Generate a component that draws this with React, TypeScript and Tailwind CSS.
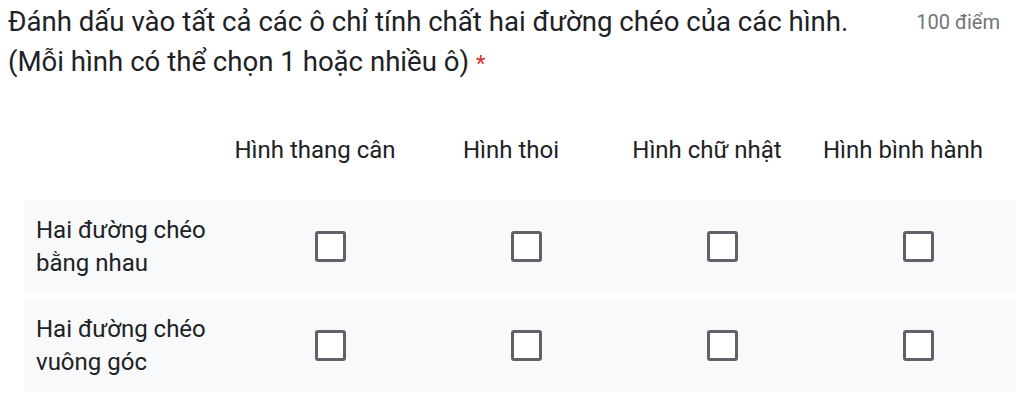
import React from "react";

const cols = ["Hình thang cân", "Hình thoi", "Hình chữ nhật", "Hình bình hành"];
const rows = [
  ["Hai đường chéo", "bằng nhau"],
  ["Hai đường chéo", "vuông góc"],
];

function Box() {
  return <div className="w-[31px] h-[31px] rounded-[3px] border-[3px] border-[#5f6368] bg-white" />;
}

export default function App() {
  return (
    <div className="w-[1024px] h-[402px] bg-white overflow-hidden text-[#202124]" style={{ fontFamily: "Roboto, 'Noto Sans', sans-serif" }}>
      <div className="flex items-start pl-[8px] pr-[24px] pt-[2px]">
        <div className="flex-1 text-[27.6px] leading-[40px]">
          <div className="whitespace-nowrap">Đánh dấu vào tất cả các ô chỉ tính chất hai đường chéo của các hình.</div>
          <div>
            (Mỗi hình có thể chọn 1 hoặc nhiều ô) <span className="text-[#d93025] text-[22px]">*</span>
          </div>
        </div>
        <div className="text-[20px] leading-[40px] text-[#70757a]">100 điểm</div>
      </div>

      <div className="ml-[24px] mr-[8px] mt-[50px]">
        <div className="grid grid-cols-[208px_196px_196px_196px_196px] text-[24px] leading-[33px]">
          <div />
          {cols.map((c) => (
            <div key={c} className="text-center pr-[30px] whitespace-nowrap">{c}</div>
          ))}
        </div>
        <div className="mt-[33px] flex flex-col gap-[6px]">
          {rows.map((r, i) => (
            <div key={i} className="grid grid-cols-[208px_196px_196px_196px_196px] h-[93px] bg-[#f8f9fa] items-center">
              <div className="pl-[12px] text-[24px] leading-[33px]">
                <div>{r[0]}</div>
                <div>{r[1]}</div>
              </div>
              {cols.map((c) => (
                <div key={c} className="flex justify-center">
                  <Box />
                </div>
              ))}
            </div>
          ))}
        </div>
      </div>
    </div>
  );
}
